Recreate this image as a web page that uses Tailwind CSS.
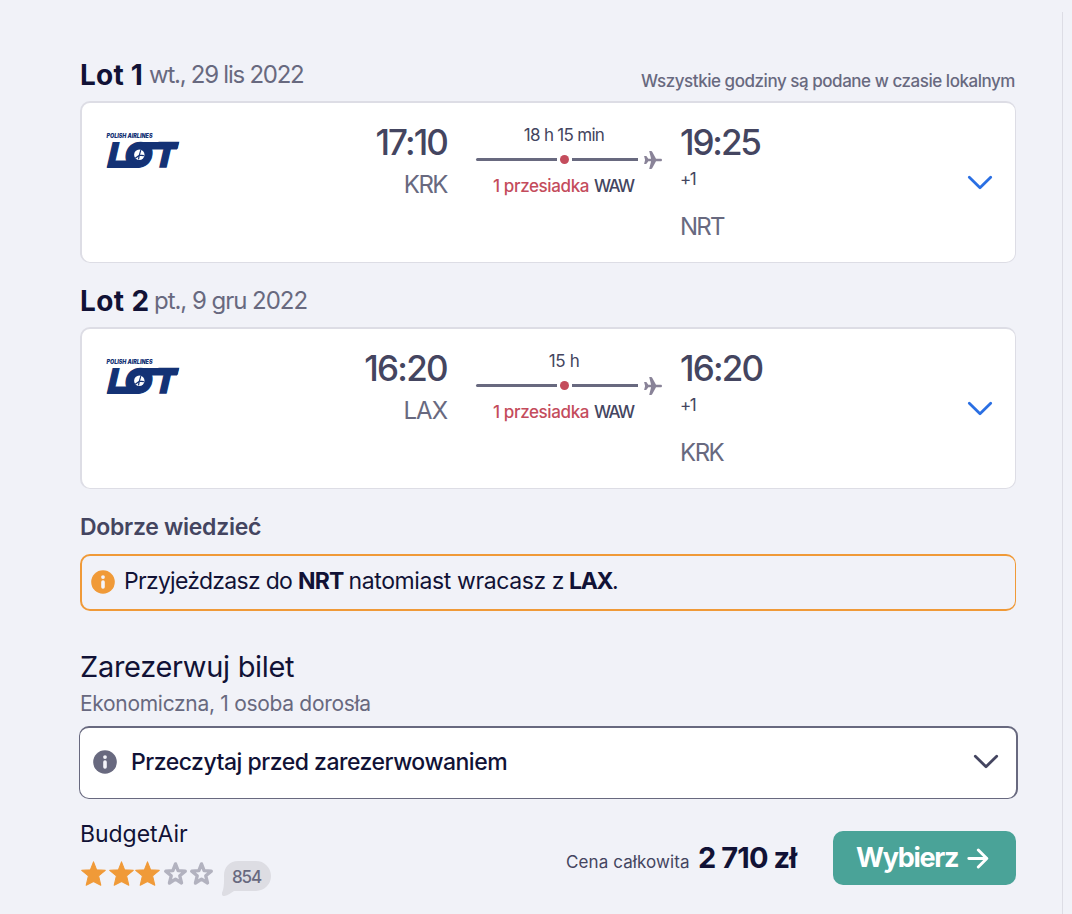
<!DOCTYPE html>
<html lang="pl">
<head>
  <meta charset="UTF-8">
  <title>Lot 1, Lot 2 - Zarezerwuj bilet</title>
  <script src="https://cdn.jsdelivr.net/npm/@tailwindcss/browser@4"></script>
</head>
<body class="h-[914px] overflow-hidden bg-[#f1f2f8] font-['Inter',sans-serif] text-[#111236]">

  <!-- shared icons -->
  <svg class="hidden">
    <symbol id="lot-logo" viewBox="0 0 74 38">
      <text x="0.5" y="5.9" font-family="Inter, sans-serif" font-size="6" font-weight="900" font-style="italic" fill="#143275" textLength="46" lengthAdjust="spacingAndGlyphs">POLISH AIRLINES</text>
      <g fill="#143275" stroke="#143275" font-family="Inter, sans-serif" font-weight="900" font-size="33.5">
        <text transform="translate(0 35) skewX(-13)" stroke-width="1.4" textLength="17" lengthAdjust="spacingAndGlyphs">L</text>
        <text transform="translate(17.6 34.8) skewX(-7)" stroke-width="1.2" textLength="28" lengthAdjust="spacingAndGlyphs">O</text>
        <text transform="translate(46.5 35) skewX(-13)" stroke-width="1.6" textLength="21" lengthAdjust="spacingAndGlyphs">T</text>
      </g>
      <!-- bars that join the letters -->
      <path d="M31 10h42l-2 7.600H40zM4 28.500h20l10 7.500H1z" fill="#143275"/>
      <ellipse cx="33.300" cy="22.900" rx="10" ry="10" fill="#143275"/>
      <circle cx="33.300" cy="22.800" r="5.200" fill="#fff"/>
      <path d="M34.800 18.200 33.300 23.200l4.600.5M33.300 23.200l-4 3M33.300 23.200l-.8 4.200" fill="none" stroke="#143275" stroke-width="1.200"/>
    </symbol>
    <symbol id="plane" viewBox="0 0 18 18">
      <path d="M18 9c0 .8-.6 1.300-1.400 1.300h-4.600L8.200 17.300c-.3.5-.6.700-1.100.7H5.200L7.100 10.300 4.300 10.200 2.700 12.500c-.2.300-.5.400-.9.400H.1L1.100 9 .1 5.100h1.700c.4 0 .7.100.9.400L4.300 7.800l2.800-.1L5.200 0h1.900c.5 0 .8.200 1.100.7L12 7.700h4.600c.8 0 1.400.5 1.400 1.300z" fill="#898398"/>
    </symbol>
    <symbol id="chevron" viewBox="0 0 26 16">
      <path d="M2.300 2.300 13 12.700 23.700 2.300" fill="none" stroke="currentColor" stroke-width="2.800" stroke-linecap="round" stroke-linejoin="round"/>
    </symbol>
    <symbol id="info" viewBox="0 0 24 24">
      <circle cx="12" cy="12" r="11.800" fill="currentColor"/>
      <circle cx="12" cy="7.100" r="1.900" fill="#f4f4fa"/>
      <rect x="10.200" y="10.200" width="3.600" height="8.600" rx="1.700" fill="#f4f4fa"/>
    </symbol>
    <symbol id="star" viewBox="0 0 24 24">
      <path d="M12 .8 15 8.500 23.300 9 16.900 14.300 19 23.200 12 19.600 5 23.200 7.100 14.300.7 9 9 8.500z" fill="currentColor" stroke="currentColor" stroke-width="1" stroke-linejoin="round"/>
    </symbol>
    <symbol id="star-empty" viewBox="0 0 24 24">
      <path d="M12 2.800 14.500 9.300 21.400 9.800 16.100 14.200 17.800 21.100 12 17.400 6.200 21.100 7.900 14.200 2.600 9.800 9.500 9.300z" fill="none" stroke="currentColor" stroke-width="3.200" stroke-linejoin="round"/>
    </symbol>
  </svg>

  <div class="flex h-full">
    <main class="w-[1062px] shrink-0 pl-20 pr-[46px]">

      <!-- Lot 1 -->
      <div class="flex h-[101px] justify-between whitespace-nowrap pt-[62px]">
        <h2 class="flex h-[25px] items-center">
          <span class="w-[69px] text-[28px] font-bold tracking-[0.2px]">Lot 1</span>
          <span class="text-2xl tracking-[-1.25px] text-[#68697f]">wt., 29 lis 2022</span>
        </h2>
        <p class="mr-[1px] mt-[7px] flex h-[26px] items-center text-[17px] font-medium tracking-[-0.46px] text-[#68697f]">Wszystkie godziny są podane w czasie lokalnym</p>
      </div>
      <section class="flex h-[162px] w-[936px] rounded-[10px] border border-t-2 border-l-2 border-[#dddde5] bg-white pl-6">
        <svg class="mt-[29px] h-[38px] w-[74px]"><use href="#lot-logo"/></svg>
        <div class="w-[267px] whitespace-nowrap pt-4 text-right">
          <div class="h-[46px] text-[35px] font-medium leading-[46px] tracking-[-1.9px] text-[#444560]">17:10</div>
          <div class="h-[39px] text-2xl leading-[39px] tracking-[-1.5px] text-[#68697f]">KRK</div>
        </div>
        <div class="ml-[29px] w-[188px] whitespace-nowrap pt-5 text-[17px] text-[#444560]">
          <div class="h-6 w-44 text-center leading-6 tracking-[-0.7px]">18 h 15 min</div>
          <div class="flex h-[25px] items-center">
            <span class="h-[3px] w-[81px] rounded-l-full bg-[#68697f]"></span>
            <span class="mx-[3px] size-[9px] rounded-full bg-[#c44c5c]"></span>
            <span class="h-[3px] w-[66px] bg-[#68697f]"></span>
            <svg class="ml-[6px] size-[18px]"><use href="#plane"/></svg>
          </div>
          <div class="h-7 pl-[17px] font-medium leading-7"><span class="tracking-[-0.38px] text-[#c44c5c]">1 przesiadka</span><span class="ml-[5px] tracking-[-1.6px]">WAW</span></div>
        </div>
        <div class="ml-4 w-[120px] pt-4 text-[#444560]">
          <div class="h-[46px] text-[35px] font-medium leading-[46px] tracking-[-2.1px]">19:25</div>
          <div class="h-7 text-[17px] leading-7 tracking-[-1.5px]">+1</div>
          <div class="mt-5 h-7 text-2xl leading-7 tracking-[-1.8px] text-[#68697f]">NRT</div>
        </div>
        <button class="ml-auto mr-[22px] self-center text-[#2a6fe3]"><svg class="block h-4 w-[26px]"><use href="#chevron"/></svg></button>
      </section>

      <!-- Lot 2 -->
      <h2 class="flex h-16 items-center whitespace-nowrap pt-3">
        <span class="w-[74px] text-[28px] font-bold tracking-[0.4px]">Lot 2</span>
        <span class="text-2xl tracking-[-1.03px] text-[#68697f]">pt., 9 gru 2022</span>
      </h2>
      <section class="flex h-[162px] w-[936px] rounded-[10px] border border-t-2 border-l-2 border-[#dddde5] bg-white pl-6">
        <svg class="mt-[29px] h-[38px] w-[74px]"><use href="#lot-logo"/></svg>
        <div class="w-[267px] whitespace-nowrap pt-4 text-right">
          <div class="h-[46px] text-[35px] font-medium leading-[46px] tracking-[-1.7px] text-[#444560]">16:20</div>
          <div class="h-[39px] text-2xl leading-[39px] tracking-[-1px] text-[#68697f]">LAX</div>
        </div>
        <div class="ml-[29px] w-[188px] whitespace-nowrap pt-5 text-[17px] text-[#444560]">
          <div class="h-6 w-44 text-center leading-6 tracking-[-0.34px]">15 h</div>
          <div class="flex h-[25px] items-center">
            <span class="h-[3px] w-[81px] rounded-l-full bg-[#68697f]"></span>
            <span class="mx-[3px] size-[9px] rounded-full bg-[#c44c5c]"></span>
            <span class="h-[3px] w-[66px] bg-[#68697f]"></span>
            <svg class="ml-[6px] size-[18px]"><use href="#plane"/></svg>
          </div>
          <div class="h-7 pl-[17px] font-medium leading-7"><span class="tracking-[-0.38px] text-[#c44c5c]">1 przesiadka</span><span class="ml-[5px] tracking-[-1.6px]">WAW</span></div>
        </div>
        <div class="ml-4 w-[120px] pt-4 text-[#444560]">
          <div class="h-[46px] text-[35px] font-medium leading-[46px] tracking-[-1.8px]">16:20</div>
          <div class="h-7 text-[17px] leading-7 tracking-[-1.5px]">+1</div>
          <div class="mt-5 h-7 text-2xl leading-7 tracking-[-1.5px] text-[#68697f]">KRK</div>
        </div>
        <button class="ml-auto mr-[22px] self-center text-[#2a6fe3]"><svg class="block h-4 w-[26px]"><use href="#chevron"/></svg></button>
      </section>

      <!-- Dobrze wiedzieć -->
      <h3 class="h-[65px] pt-[25px] text-[23px] font-semibold leading-[26px] tracking-[-0.29px] text-[#444560]">Dobrze wiedzieć</h3>
      <div class="flex h-[57px] w-[936px] items-center whitespace-nowrap rounded-[10px] border-2 border-r border-[#f09a38] pb-[3px] pl-[9px] text-[23px]">
        <svg class="mr-[9px] mt-[1px] size-6 text-[#f09a38]"><use href="#info"/></svg>
        <p><span class="tracking-[-0.72px]">Przyjeżdzasz do</span><b class="ml-[6px] tracking-[-0.82px]">NRT</b><span class="ml-[5px] tracking-[-0.4px]">natomiast wracasz z</span><b class="ml-[5px] tracking-[-1.4px]">LAX</b>.</p>
      </div>

      <!-- Zarezerwuj bilet -->
      <h2 class="mt-[36px] h-[40px] text-[29px] leading-[40px] tracking-[-0.32px]">Zarezerwuj bilet</h2>
      <p class="mt-1 h-7 text-[21px] leading-[26px] tracking-[-0.3px] text-[#68697f]">Ekonomiczna, 1 osoba dorosła</p>
      <div class="-ml-px mt-[7px] flex h-[73px] w-[939px] items-center rounded-[10px] border border-t-2 border-r-2 border-[#68697f] bg-white pb-[2px] pl-[13px] pr-[17px]">
        <svg class="size-6 text-[#68697f]"><use href="#info"/></svg>
        <span class="ml-[14px] text-[23px] font-medium tracking-[-0.49px]">Przeczytaj przed zarezerwowaniem</span>
        <svg class="ml-auto h-4 w-[26px] text-[#444560]"><use href="#chevron"/></svg>
      </div>

      <div class="flex">
        <div class="w-[486px] pt-5">
          <h3 class="h-[30px] text-[23px] leading-[30px] tracking-[-0.04px]">BudgetAir</h3>
          <div class="mt-3 flex">
            <div class="flex w-[143px] gap-[3px] pl-[1px] text-[#f09a38]">
              <svg class="size-[25px]"><use href="#star"/></svg>
              <svg class="size-[25px]"><use href="#star"/></svg>
              <svg class="-ml-[2px] size-[25px]"><use href="#star"/></svg>
              <svg class="size-[25px] text-[#b2b2bf]"><use href="#star-empty"/></svg>
              <svg class="-ml-[2px] size-[25px] text-[#b2b2bf]"><use href="#star-empty"/></svg>
            </div>
            <div class="relative -ml-px h-[30px] w-[49px]">
              <svg class="absolute inset-0 h-9 w-[49px] text-[#dddde3]" viewBox="0 0 49 36"><path d="M16 0h18a15 15 0 0 1 0 30H12c-3 1.700-6 4.500-9.500 4.900C-.3 35-.6 32.800.3 31 1.800 28 2.200 22 2 15 1.800 6 8 0 16 0z" fill="currentColor"/></svg>
              <span class="relative block pl-[10px] text-[17px] font-medium leading-[32px] tracking-[-1.1px] text-[#68697f]">854</span>
            </div>
          </div>
        </div>
        <div class="flex h-[54px] w-[267px] items-baseline whitespace-nowrap pt-[37px]">
          <span class="w-[132px] text-[17px] tracking-[0.1px] text-[#444560]">Cena całkowita</span>
          <span class="text-[29px] font-bold tracking-[-0.9px]">2 710 zł</span>
        </div>
        <button class="mt-8 flex h-[54px] w-[183px] items-center rounded-[10px] bg-[#4aa398] pl-[23px] pt-px text-[27px] font-bold tracking-[-1.3px] text-white">Wybierz
          <svg class="ml-[9px] h-[22px] w-[22px]" viewBox="0 0 22 22"><path d="M1.800 10.500h18M11.300 2l8.500 8.500-8.500 8.500" fill="none" stroke="currentColor" stroke-width="2.900" stroke-linecap="round" stroke-linejoin="round"/></svg>
        </button>
      </div>
    </main>
    <div class="mt-3 flex-1 border-l border-[#dddde5]"></div>
  </div>
</body>
</html>
